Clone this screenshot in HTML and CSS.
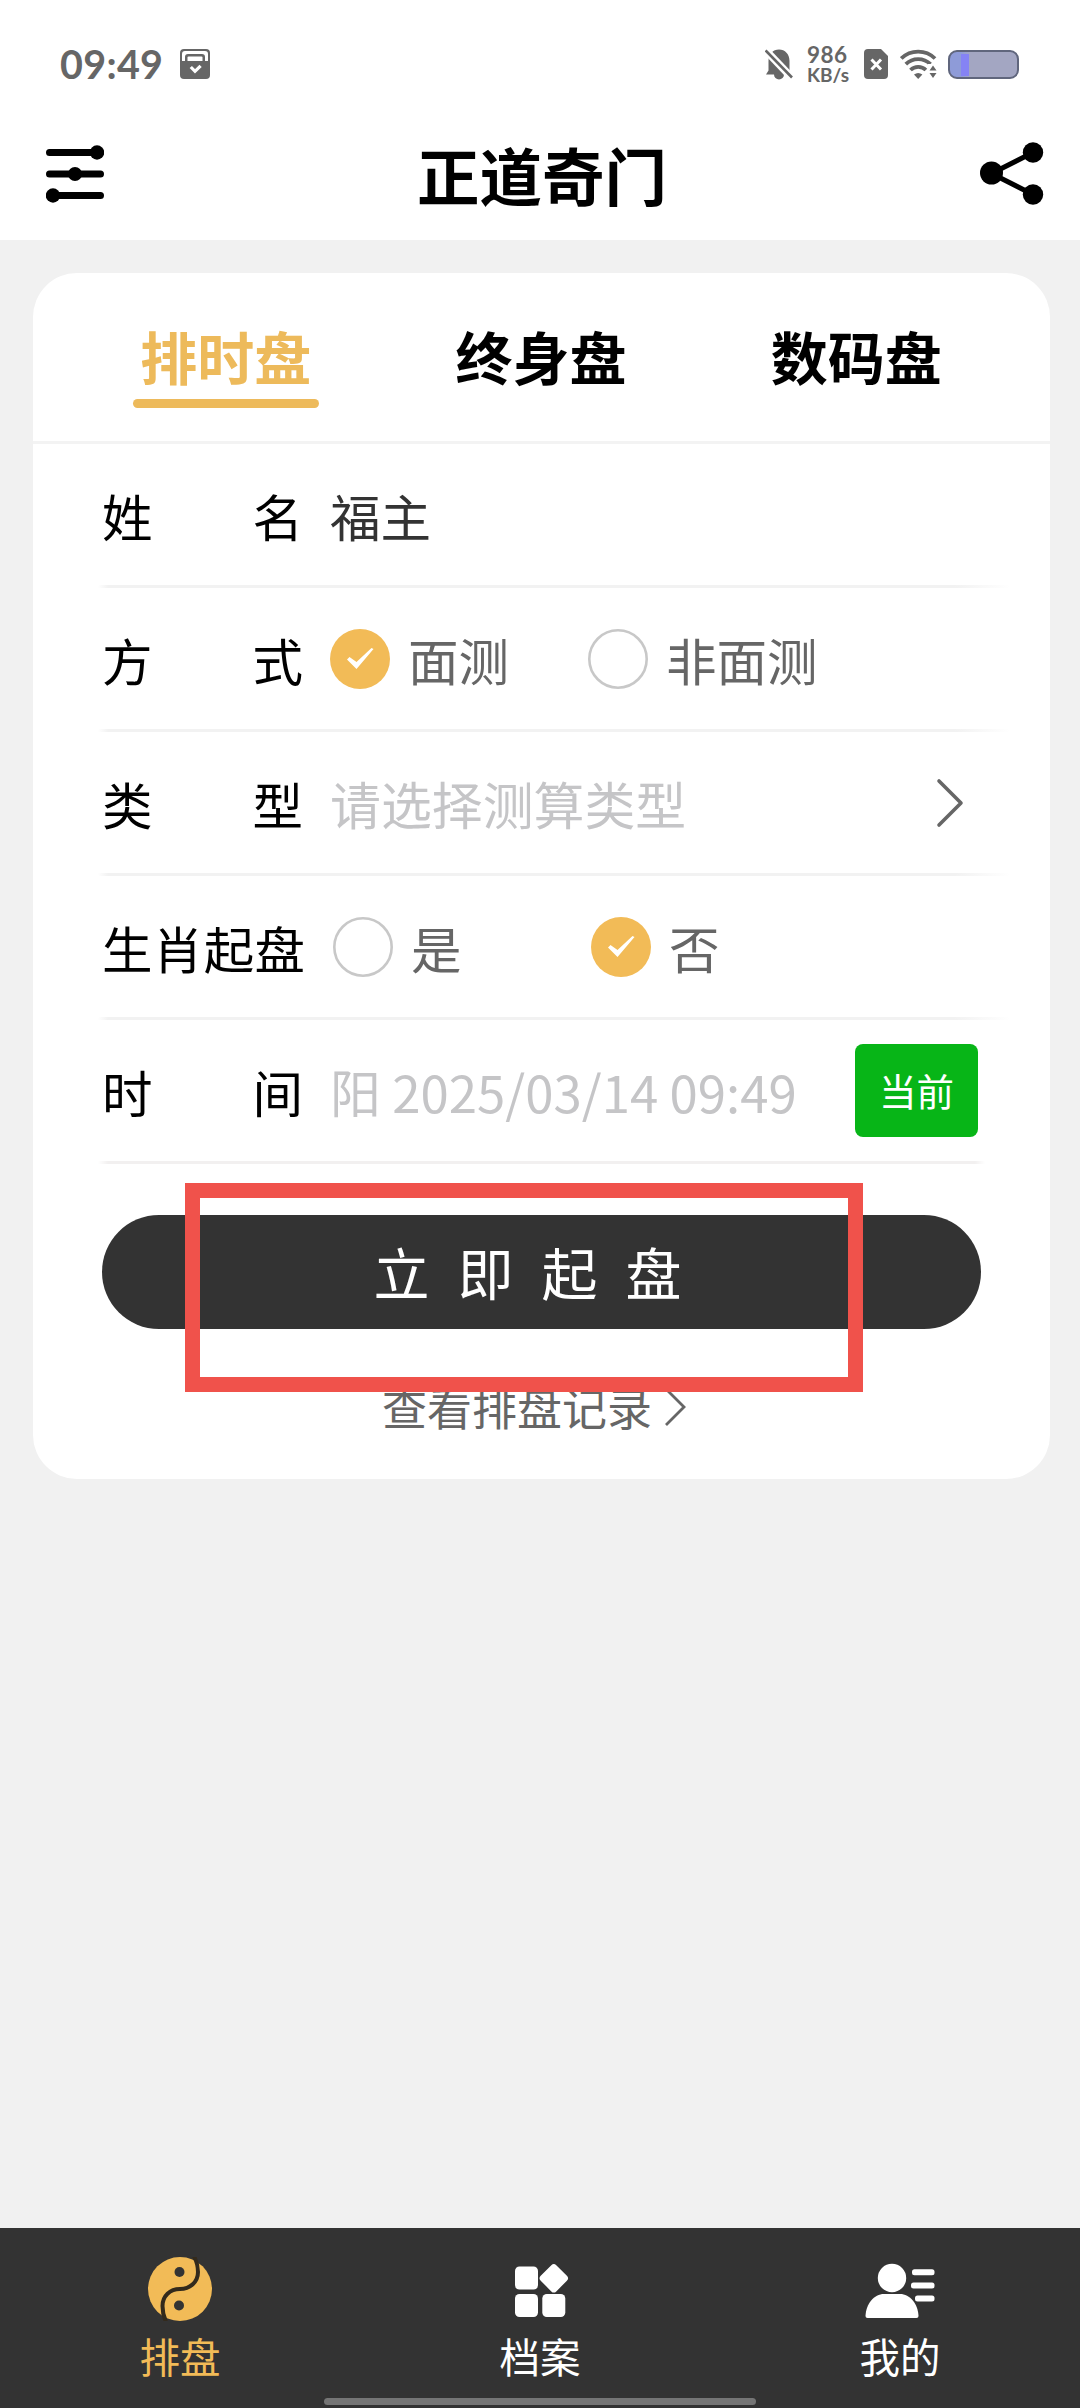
FILE: index.html
```html
<!DOCTYPE html>
<html lang="zh-CN">
<head>
<meta charset="utf-8">
<title>正道奇门</title>
<link rel="stylesheet" href="styles.css">
</head>
<body>
<div class="app">
  <div class="status">
    <span class="clock">09:49</span>
    <svg class="status-note" width="30" height="30" viewBox="0 0 30 30">
      <rect width="30" height="30" rx="4" fill="#666"/>
      <path d="M2 12V5a3 3 0 0 1 3-3h20a3 3 0 0 1 3 3v7h-3V8a3 3 0 0 0-3-3H8a3 3 0 0 0-3 3v4z" fill="#fff"/>
      <path d="M7.500 12V8.500a1 1 0 0 1 1-1h13a1 1 0 0 1 1 1V12z" fill="#fff"/>
      <path d="M10.800 18l4.200 4.300 5.600-5.500" fill="none" stroke="#fff" stroke-width="3.200"/>
    </svg>
    <div class="status-right">
      <svg width="28" height="31" viewBox="0 0 28 31">
        <path d="M1 25.500l2.500-4V12C3.500 5 8 .5 14 .5S24.500 5 24.500 12v9.500l2.500 4h-8a5 5 0 0 1-10 0z" fill="#666"/>
        <path d="M-1-.500L28 30" stroke="#fff" stroke-width="7.500"/>
        <path d="M.6 1.500L27 28.500" stroke="#666" stroke-width="2.600"/>
      </svg>
      <div class="speed"><span class="speed-num">986</span><span class="speed-unit">KB/s</span></div>
      <svg class="sim" width="24" height="30" viewBox="0 0 24 30">
        <path d="M4 0h13l7 7v19a4 4 0 0 1-4 4H4a4 4 0 0 1-4-4V4a4 4 0 0 1 4-4z" fill="#666"/>
        <path d="M7.500 10.500l9.500 10M17 10.500l-9.500 10" stroke="#fff" stroke-width="3"/>
      </svg>
      <svg class="wifi" width="37" height="30" viewBox="0 0 37 30">
        <g fill="none" stroke="#666" stroke-width="3.800">
          <path d="M1.300 9.500a24 24 0 0 1 33.700 0"/>
          <path d="M5.800 15.200a17.500 17.500 0 0 1 24.700 0"/>
          <path d="M10.500 21a11 11 0 0 1 15.400 0"/>
        </g>
        <path d="M14 25.500q4.200-3 8.400 0L18.200 30z" fill="#666"/>
        <path d="M28 15h9v15h-9z" fill="#fff"/>
        <path d="M29.500 21.500l3.500-5 3.500 5zM29.500 24l3.500 5 3.500-5z" fill="#666"/>
      </svg>
      <div class="battery"><i></i></div>
    </div>
  </div>

  <header class="header">
    <svg width="58" height="58" viewBox="0 0 58 58">
      <path d="M3.500 7.500h51M3.500 29h51M3.500 50.500h51" stroke="#000" stroke-width="7" stroke-linecap="round"/>
      <circle cx="51" cy="7.500" r="7.200"/><circle cx="29" cy="29" r="7"/><circle cx="7" cy="50.500" r="7.200"/>
    </svg>
    <h1>正道奇门</h1>
    <svg width="64" height="64" viewBox="0 0 64 64">
      <path d="M53 10.500L11.500 31.500 53 52.500" fill="none" stroke="#000" stroke-width="5"/>
      <circle cx="11.500" cy="31" r="11.500"/><circle cx="53" cy="10.500" r="10.200"/><circle cx="53" cy="52.500" r="10.200"/>
    </svg>
  </header>

  <main class="main">
    <section class="card">
      <nav class="tabs">
        <span class="tab active">排时盘</span>
        <span class="tab">终身盘</span>
        <span class="tab">数码盘</span>
      </nav>
      <div class="row">
        <span class="label"><span>姓</span><span>名</span></span>
        <span class="name">福主</span>
      </div>
      <div class="row">
        <span class="label"><span>方</span><span>式</span></span>
        <span class="option"><svg class="radio" viewBox="0 0 60 60"><circle cx="30" cy="30" r="30" fill="#f2bb57"/><path d="M17 30.500l2.500-2.500 7 5L41.500 19l2 1L26.500 40z" fill="#fff"/></svg>面测</span>
        <span class="option"><svg class="radio" viewBox="0 0 60 60"><circle cx="30" cy="30" r="28.700" fill="none" stroke="#c8c8c8" stroke-width="2.600"/></svg>非面测</span>
      </div>
      <div class="row">
        <span class="label"><span>类</span><span>型</span></span>
        <span class="placeholder">请选择测算类型</span>
        <svg class="arrow" width="28" height="50" viewBox="0 0 28 50"><path d="M3 3l22 22L3 47" fill="none" stroke="#666" stroke-width="3.600" stroke-linecap="round" stroke-linejoin="round"/></svg>
      </div>
      <div class="row row-zodiac">
        <span class="label"><span>生</span><span>肖</span><span>起</span><span>盘</span></span>
        <span class="option"><svg class="radio" viewBox="0 0 60 60"><circle cx="30" cy="30" r="28.700" fill="none" stroke="#c8c8c8" stroke-width="2.600"/></svg>是</span>
        <span class="option"><svg class="radio" viewBox="0 0 60 60"><circle cx="30" cy="30" r="30" fill="#f2bb57"/><path d="M17 30.500l2.500-2.500 7 5L41.500 19l2 1L26.500 40z" fill="#fff"/></svg>否</span>
      </div>
      <div class="row row-time">
        <span class="label"><span>时</span><span>间</span></span>
        <span class="placeholder">阳 2025/03/14 09:49</span>
        <span class="now">当前</span>
      </div>
      <div class="submit">立即起盘</div>
      <div class="history">查看排盘记录<svg width="22" height="40" viewBox="0 0 22 40"><path d="M2 2l18 18L2 38" fill="none" stroke="#666" stroke-width="2.800"/></svg></div>
      <div class="highlight"></div>
    </section>
  </main>

  <footer class="tabbar">
    <div class="item current">
      <svg width="64" height="64" viewBox="0 0 64 64">
        <circle cx="32" cy="32" r="32" fill="#f2bb57"/>
        <path d="M46-1Q50 7 50 15C50 25 42 32 32 32S14.500 39 14.500 49Q14.500 57 18 65" fill="none" stroke="#332a1c" stroke-width="4"/>
        <circle cx="31.500" cy="15" r="5" fill="#333"/><circle cx="31" cy="48.500" r="5" fill="#333"/>
      </svg>
      <span>排盘</span>
    </div>
    <div class="item">
      <svg width="64" height="64" viewBox="0 0 64 64" fill="#fff">
        <rect x="7" y="9.500" width="23" height="23" rx="4.500"/>
        <rect x="7" y="37" width="23" height="23" rx="4.500"/>
        <rect x="34.300" y="37" width="23" height="23" rx="4.500"/>
        <rect x="34.800" y="10.300" width="22" height="22" rx="3.500" transform="rotate(45 45.800 21.300)"/>
      </svg>
      <span>档案</span>
    </div>
    <div class="item">
      <svg width="72" height="64" viewBox="0 0 72 64" fill="#fff">
        <circle cx="28" cy="21" r="14.200"/>
        <path d="M1.500 59C2 47 10 37 20 37h16c10 0 18 10 18.500 22q0 2-2 2h-49q-2 0-2-2z"/>
        <rect x="48" y="12.200" width="22.500" height="6" rx="2.500"/>
        <rect x="47" y="25.500" width="23.500" height="6" rx="2.500"/>
        <rect x="51" y="38.500" width="19.500" height="6" rx="2.500"/>
      </svg>
      <span>我的</span>
    </div>
    <div class="home"></div>
  </footer>
</div>
</body>
</html>
```

FILE: styles.css
```css
* { box-sizing: border-box; }
body {
  margin: 0;
  font-family: "Noto Sans CJK SC", sans-serif;
  color: #000;
}
svg { display: block; flex: none; }
.app {
  width: 1080px;
  height: 2408px;
  display: flex;
  flex-direction: column;
  background: #f1f1f1;
}

/* status bar */
.status {
  height: 128px;
  padding: 0 61px 0 60px;
  display: flex;
  align-items: center;
  background: #fff;
  color: #666;
  font-family: Lato, "Noto Sans", sans-serif;
}
.clock { width: 105px; font-size: 39.500px; font-weight: 700; line-height: 48px; letter-spacing: 0.3px; white-space: nowrap; }
.status-note { margin-left: 15px; }
.status-right { margin-left: auto; display: flex; align-items: center; }
.speed { width: 44px; margin-left: 14px; display: flex; flex-direction: column; font-weight: 700; white-space: nowrap; }
.speed-num { font-size: 22.500px; line-height: 20px; letter-spacing: 0.5px; }
.speed-unit { font-size: 19px; line-height: 19px; }
.sim { margin-left: 13px; }
.wifi { margin-left: 12px; }
.battery {
  width: 71px;
  height: 29px;
  margin-left: 11px;
  padding-left: 11px;
  border: 2px solid #60667d;
  border-radius: 9px;
  background: linear-gradient(90deg, #8e9bd8 11px, #a3a6c2 20px);
}
.battery i { display: block; width: 8px; height: 22px; margin-top: 2px; background: #8583f4; }

/* title bar */
.header {
  height: 112px;
  padding: 0 36px 20px 46px;
  display: flex;
  align-items: center;
  justify-content: space-between;
  background: #fff;
}
.header h1 { margin: 0; font-size: 62.500px; line-height: 92px; font-weight: 700; }

/* form card */
.main { flex: 1; padding: 33px 30px 0 33px; }
.card {
  position: relative;
  height: 1206px;
  border-radius: 44px;
  background: #fff;
}
.tabs {
  height: 171px;
  padding: 0 36px 0 35px;
  display: flex;
  border-bottom: 3px solid #f3f3f3;
}
.tab {
  flex: 1;
  display: flex;
  flex-direction: column;
  align-items: center;
  padding-top: 41px;
  font-size: 57px;
  line-height: 82px;
  font-weight: 700;
}
.tab.active { color: #edba5b; }
.tab.active::after {
  content: "";
  width: 186px;
  height: 9px;
  margin-top: 3px;
  border-radius: 5px;
  background: #edba5b;
}
.row {
  height: 144px;
  margin: 0 40px 0 65px;
  padding: 0 46px 3px 4px;
  display: flex;
  align-items: center;
  font-size: 50.500px;
  line-height: 74px;
  white-space: nowrap;
  background: linear-gradient(90deg, transparent, #f2f2f2 10px, #f2f2f2 calc(100% - 55px), transparent) bottom / 100% 3px no-repeat;
}
.label { width: 201px; margin-right: 27px; display: flex; justify-content: space-between; }
.name { color: #333; }
.option { width: 258px; display: flex; align-items: center; color: #666; }
.radio { width: 60px; height: 60px; margin-right: 18px; }
.placeholder { color: #c5c5c7; font-size: 50.900px; }
.arrow { margin-left: auto; }
.row-zodiac .label { width: 203px; margin-right: 28px; }
.row-time {
  margin-right: 65px;
  padding-right: 7px;
  background: linear-gradient(90deg, transparent, #f2f0f0 10px, #f2f0f0 calc(100% - 10px), transparent) bottom / 100% 3px no-repeat;
}
.now {
  width: 123px;
  height: 93px;
  margin-left: auto;
  border-radius: 8px;
  background: #07b517;
  color: #fff;
  font-size: 37.500px;
  line-height: 92px;
  text-align: center;
}
.submit {
  height: 114px;
  margin: 51px 69px 0;
  border-radius: 57px;
  background: #333;
  color: #fff;
  font-size: 56px;
  line-height: 112px;
  letter-spacing: 28px;
  text-align: center;
}
.history {
  height: 66px;
  margin-top: 45px;
  padding-right: 15px;
  display: flex;
  align-items: center;
  justify-content: center;
  gap: 12px;
  color: #666;
  font-size: 45px;
  line-height: 66px;
}
/* callout frame drawn over the submit button */
.highlight {
  position: absolute;
  left: 152px;
  top: 910px;
  width: 678px;
  height: 209px;
  border: 15px solid #f0524b;
}

/* bottom navigation */
.tabbar {
  position: relative;
  height: 180px;
  padding-top: 29px;
  display: flex;
  background: #333;
  color: #fff;
}
.item {
  flex: 1;
  display: flex;
  flex-direction: column;
  align-items: center;
  gap: 6px;
  font-size: 40.500px;
  line-height: 58px;
}
.current { color: #f2bb57; }
.home {
  position: absolute;
  left: 324px;
  bottom: 3px;
  width: 432px;
  height: 7px;
  border-radius: 4px;
  background: #757575;
}
```
